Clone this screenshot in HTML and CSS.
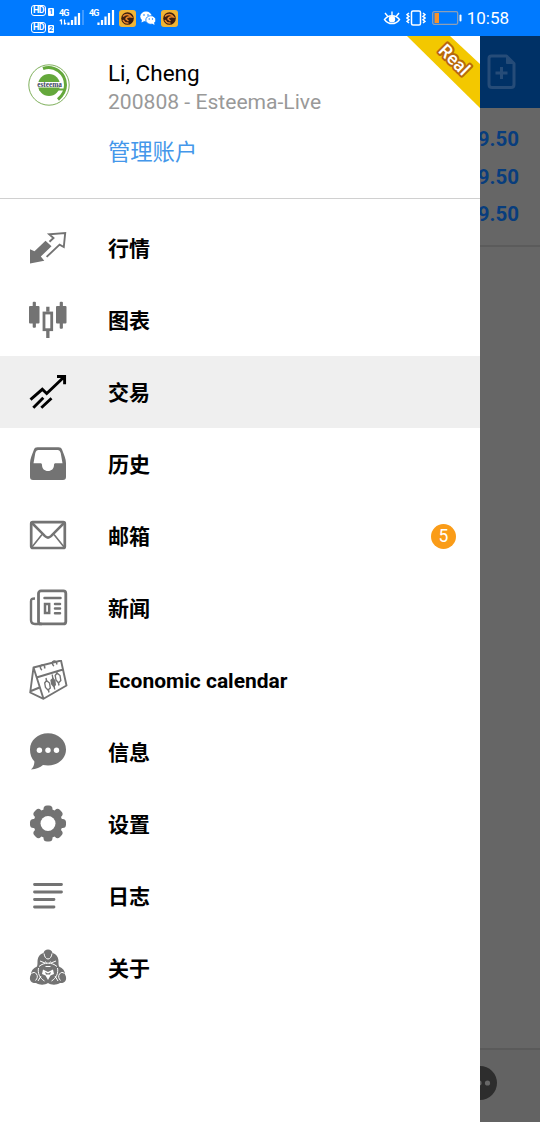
FILE: index.html
```html
<!DOCTYPE html>
<html lang="zh-CN">
<head>
    <meta charset="UTF-8">
    <meta name="viewport" content="width=device-width, initial-scale=1.0">
    <title>交易</title>
    <link rel="stylesheet" href="styles.css">
</head>
<body>
    <div class="phone">
        <header class="status-bar">
            <div class="status-left">
                <div class="hd-group">
                    <div class="hd"><b>HD</b><i>1</i></div>
                    <div class="hd"><b>HD</b><i>2</i></div>
                </div>
                <svg class="signal" width="26" height="20" viewBox="0 0 26 20">
                    <text x="0" y="8" class="net">4G</text>
                    <path d="M2.500 11.500v5M.8 13.200l1.700-1.700M5.500 11.500v5M7.200 14.800l-1.700 1.700" stroke="#fff" stroke-width="1.200" fill="none"/>
                    <path d="M9.500 14.500v2.500M13 12v5M16.500 8.500V17M20 5v12" stroke="#fff" stroke-width="2.200"/>
                    <path d="M24 2v15" stroke="#3f9aff" stroke-width="2"/>
                </svg>
                <svg class="signal second" width="26" height="20" viewBox="0 0 26 20">
                    <text x="0" y="8" class="net">4G</text>
                    <path d="M9.500 14.500v2.500M13 12v5M16.500 8.500V17M20 5v12M24 2v15" stroke="#fff" stroke-width="2.200"/>
                </svg>
                <svg class="app" width="17" height="17" viewBox="0 0 17 17">
                    <rect width="17" height="17" rx="3" fill="#f0b435"/>
                    <circle cx="8.500" cy="8.500" r="6.300" fill="#3c1d10"/>
                    <path d="M4 6.500c2.500-3 6.500-2.500 8.500.5-3-.5-5 0-5.500 2l2.500 2M4 10c1 2 3 3.500 5.500 3" stroke="#e8862a" stroke-width="1.500" fill="none"/>
                </svg>
                <svg class="wechat" width="16" height="15" viewBox="0 0 16 15">
                    <ellipse cx="6" cy="5.500" rx="5.700" ry="4.900" fill="#fff"/>
                    <path d="M2 8.500l-.5 3 3-1.500z" fill="#fff"/>
                    <ellipse cx="10.800" cy="9" rx="5" ry="4.300" fill="#fff" stroke="#007aff" stroke-width=".8"/>
                    <path d="M12 12.500l2.500 1.500-.4-2.500z" fill="#fff"/>
                    <circle cx="4" cy="4" r=".8" fill="#007aff"/>
                    <circle cx="8" cy="4" r=".8" fill="#007aff"/>
                    <circle cx="9.200" cy="8" r=".7" fill="#007aff"/>
                    <circle cx="12.500" cy="8" r=".7" fill="#007aff"/>
                </svg>
                <svg class="app" width="17" height="17" viewBox="0 0 17 17">
                    <rect width="17" height="17" rx="3" fill="#f0b435"/>
                    <circle cx="8.500" cy="8.500" r="6.300" fill="#3c1d10"/>
                    <path d="M4 6.500c2.500-3 6.500-2.500 8.500.5-3-.5-5 0-5.500 2l2.500 2M4 10c1 2 3 3.500 5.500 3" stroke="#e8862a" stroke-width="1.500" fill="none"/>
                </svg>
            </div>
            <div class="status-right">
                <svg width="18" height="16" viewBox="0 0 18 16" fill="none" stroke="#fff" stroke-width="1.400">
                    <path d="M1.500 9.500c4-5 11-5 15 0-4 5.500-11 5.500-15 0zM9 5V1.500M4.500 6L2 3M13.500 6L16 3"/>
                    <circle cx="9" cy="9.300" r="2.500" fill="#fff"/>
                </svg>
                <svg width="20" height="16" viewBox="0 0 20 16" fill="none" stroke="#fff" stroke-width="1.500">
                    <rect x="5.500" y="1" width="9" height="14" rx="1.500"/>
                    <path d="M3 3L1 4.700 3 6.400 1 8l2 1.700L1 11.400 3 13M17 3l2 1.700-2 1.700L19 8l-2 1.700 2 1.700-2 1.600"/>
                </svg>
                <svg class="battery" width="30" height="14" viewBox="0 0 30 14">
                    <rect x=".7" y=".7" width="25" height="12.600" rx="1.500" fill="none" stroke="#8f9fb5" stroke-width="1.300"/>
                    <rect x="2.500" y="2" width="4.500" height="10" fill="#f7922b"/>
                    <rect x="27.500" y="3.500" width="2" height="7" rx="1" fill="#fff"/>
                </svg>
                <span class="clock">10:58</span>
            </div>
        </header>

        <div class="screen">
            <nav class="drawer">
                <div class="account">
                    <svg class="broker" width="42" height="42" viewBox="0 0 42 42">
                        <circle cx="21" cy="21" r="20.200" fill="#fff" stroke="#7fb05c" stroke-width="1"/>
                        <path d="M15 4.500C26 .5 37.500 9 37.500 21c0 6-3.500 11-7.500 14.500" fill="none" stroke="#64a83b" stroke-width="3"/>
                        <circle cx="21" cy="21" r="11" fill="#64a83b"/>
                        <rect x="8" y="18" width="27" height="5.500" fill="#fff"/>
                        <path d="M11 25.500h26" stroke="#64a83b" stroke-width="2"/>
                        <text x="21.500" y="22.700" class="broker-name">esteema</text>
                    </svg>
                    <div class="account-text">
                        <div class="name">Li, Cheng</div>
                        <div class="login">200808 - Esteema-Live</div>
                        <a class="manage">管理账户</a>
                    </div>
                    <svg class="ribbon" width="73" height="72" viewBox="0 0 73 72">
                        <path d="M0 0h43l30 28v44z" fill="#f3c800"/>
                        <text x="0" y="0" transform="translate(30.500 15.500) rotate(45)" class="ribbon-text">Real</text>
                    </svg>
                </div>

                <ul class="menu">
                    <li class="item">
                        <svg class="icon" viewBox="0 0 40 40">
                            <path d="M2 21.300l4.500 2L17.500 12.700l6 5.500-10.700 10.300 3.500 4.300L2 35.500z"/>
                            <path class="line" d="M21.500 13.800l4-3.800-4.300-3.800 16-1.200-1.400 14-4.200-2.400-13 12.300" stroke-width="1.900"/>
                        </svg>
                        <span class="label">行情</span>
                    </li>
                    <li class="item">
                        <svg class="icon" viewBox="0 0 40 40">
                            <rect x="1" y="6" width="10.500" height="17.500" rx="1"/>
                            <rect x="4.700" y="1.700" width="3.200" height="26" rx="1"/>
                            <path d="M18.200 6.700h3.300v5h-3.300zM18.200 31h3.300v6.900h-3.300z"/>
                            <rect class="line" x="16" y="13" width="7.700" height="16.700" stroke-width="2.800"/>
                            <rect x="28" y="6" width="10.500" height="17.500" rx="1"/>
                            <rect x="31.700" y="1.700" width="3.200" height="27" rx="1"/>
                        </svg>
                        <span class="label">图表</span>
                    </li>
                    <li class="item active">
                        <svg class="icon" viewBox="0 0 40 40">
                            <path class="line" d="M2.500 27.600l11.800-10.300 4.400 4.200L36 5M29 4.500h7.600v7.800M5.300 35.700l10-10M13.300 35.700l10.200-9.500" stroke-width="2.900"/>
                        </svg>
                        <span class="label">交易</span>
                    </li>
                    <li class="item">
                        <svg class="icon" viewBox="0 0 40 40">
                            <path fill-rule="evenodd" d="M9.500 3.200h21c2 0 2.900.8 3.500 2.300 2 5 4 9.500 4 13.800V33c0 2-1 3-3 3H5c-2 0-3-1-3-3V19.300c0-4.300 2-8.800 4-13.800.6-1.500 1.500-2.300 3.500-2.300zM10.500 6C8.700 6 8 7 7.300 9L5.500 19.300h6.800c1.200 0 1.700.5 1.700 1.700 0 3.700 2.500 6 6 6s6-2.300 6-6c0-1.200.5-1.700 1.700-1.700h6.800L32.700 9c-.7-2-1.400-3-3.200-3z"/>
                        </svg>
                        <span class="label">历史</span>
                    </li>
                    <li class="item">
                        <svg class="icon" viewBox="0 0 40 40">
                            <rect class="line" x="3.200" y="6.200" width="33.600" height="25.800" rx="1.500" stroke-width="2.700"/>
                            <path class="line" d="M4 7l13 13.200c2 1.900 4 1.900 6 0L36 7" stroke-width="2.500"/>
                            <path class="line" d="M4 31l10-12.500M36 31L26 18.500" stroke-width="1.600"/>
                        </svg>
                        <span class="label">邮箱</span>
                        <span class="badge">5</span>
                    </li>
                    <li class="item">
                        <svg class="icon" viewBox="0 0 40 40">
                            <rect class="line" x="10.500" y="2.900" width="27.300" height="33" rx="2.500" stroke-width="2.800"/>
                            <path class="line" d="M7 10.500c-3 0-4 .5-4 3V32c0 3 1 4 4 4h7" stroke-width="2.400"/>
                            <path class="line" d="M16.500 10h16" stroke-width="2.500" stroke-linecap="round"/>
                            <rect class="line" x="17" y="16" width="4.200" height="9" stroke-width="2.500"/>
                            <path class="line" d="M27 15.900h5M27 20.500h5M27 25.300h5" stroke-width="2.500" stroke-linecap="round"/>
                        </svg>
                        <span class="label">新闻</span>
                    </li>
                    <li class="item">
                        <svg class="icon" viewBox="0 0 40 40">
                            <path class="line" d="M5.500 7.500L33 .500l5.500 25-23 13.300-10-31.300L2.200 32.500l13.300 6.300M8.500 17.500L35 9.500M3 31l8.500-3.500" stroke-width="1.900" stroke-linejoin="round"/>
                            <path class="line" d="M14 10c-2-1-2.500-4.500 0-5s3 2 2.500 3.500M26 6c-2-1-2.500-4.500 0-5s3 2 2.500 3.500" stroke-width="1.600"/>
                            <path class="line" d="M18.500 20.500l3 2.500.8 5-2.300 2-2.500-2.500-.8-4.500zM29 13l3 2.500.8 5-2.300 2.500-2.500-3-.8-4.500zM18 18l.5 2.500M20.500 30l.5 2.500M28.500 11l.5 2M30.500 23l.5 2.500M24.200 14.500l2.500 15" stroke-width="1.400"/>
                            <path d="M22.300 20l2.800-2.500 2.400 3 .5 4.500-2.300 2.500-2.500-3z"/>
                        </svg>
                        <span class="label">Economic calendar</span>
                    </li>
                    <li class="item">
                        <svg class="icon" viewBox="0 0 40 40">
                            <path d="M20 1.300c10 0 18 7 18 16.200s-8 16-18 16c-2 0-3.500-.2-5-.5-3 2.500-6.500 4.300-12 4.400 2.300-2 3.300-4.400 3.400-7.900C3.500 26.500 2 22.500 2 17.500 2 8.300 10 1.300 20 1.300z"/>
                            <circle class="hole" cx="11.400" cy="18.300" r="2.700"/>
                            <circle class="hole" cx="20" cy="18.300" r="2.700"/>
                            <circle class="hole" cx="28.500" cy="18.300" r="2.700"/>
                        </svg>
                        <span class="label">信息</span>
                    </li>
                    <li class="item">
                        <svg class="icon" viewBox="0 0 40 40">
                            <circle cx="20" cy="19.500" r="14.500"/>
                            <rect x="15.500" y="1.500" width="9" height="36" rx="3.500"/>
                            <rect x="15.500" y="1.500" width="9" height="36" rx="3.500" transform="rotate(45 20 19.500)"/>
                            <rect x="15.500" y="1.500" width="9" height="36" rx="3.500" transform="rotate(90 20 19.500)"/>
                            <rect x="15.500" y="1.500" width="9" height="36" rx="3.500" transform="rotate(135 20 19.500)"/>
                            <circle class="hole" cx="20" cy="19.500" r="7.500"/>
                        </svg>
                        <span class="label">设置</span>
                    </li>
                    <li class="item">
                        <svg class="icon" viewBox="0 0 40 40">
                            <path class="line" d="M6.500 8.500h27M6.500 16h27M6.500 23.500h19.500M6.500 31h19.500" stroke-width="2.800" stroke-linecap="round"/>
                        </svg>
                        <span class="label">日志</span>
                    </li>
                    <li class="item">
                        <svg class="icon" viewBox="0 0 40 40">
                            <!-- three figures leaning together -->
                            <path d="M20 1.500c2.500 0 4 1.500 4.500 3.500 4 1 6 4.500 6 8.500 0 2 0 3.500.5 5 4 1.500 6 4.500 6 8 1.500 2 1.500 5.500 0 7-2 2-4 1.500-5 1.500-4 2.500-9 2-12 0-3 2-8 2.500-12 0-1 0-3 .5-5-1.500-1.500-1.500-1.500-5 0-7 0-3.500 2-6.500 6-8 .5-1.500.5-3 .5-5 0-4 2-7.500 6-8.500.5-2 2-3.500 4.500-3.500z"/>
                            <path class="cut" d="M16 5.500c.5 3.500 2 5.500 4 5.500s3.500-2 4-5.500M7.500 32.500c2-2 2.500-4.500 1-6.500s-3-2-5-.5M32.500 32.500c-2-2-2.500-4.500-1-6.500s3-2 5-.5"/>
                            <path class="cut" d="M11 18.500c5-4.500 13-4.500 18 0M10.500 20c-1 5 1 10 6 13M29.500 20c1 5-1 10-6 13M12 13l5 2M28 13l-5 2M13 28l-3 5M27 28l3 5"/>
                            <path class="hole" d="M15 21.500l5 2.500 5-2.500 1 4.500-3.500 1.500L20 32l-2.500-4.500L14 26z"/>
                            <path d="M17 24l3 1.500 3-1.500-1 2.500h-4z"/>
                            <path class="cut" d="M17.500 13.500l1 2M22.500 13.500l-1 2M17.500 18.500h5"/>
                        </svg>
                        <span class="label">关于</span>
                    </li>
                </ul>
            </nav>

            <main class="backdrop">
                <div class="toolbar">
                    <svg width="30" height="36" viewBox="0 0 30 36" fill="none" stroke="#264c78" stroke-width="3">
                        <path d="M4.500 2h15L27 9.500v21c0 2-1 3-3 3H5c-2 0-3-1-3-3v-26C2 3 3 2 4.500 2z" stroke-linejoin="round"/>
                        <path d="M19.500 2L27 9.500h-7.500z" fill="#264c78" stroke-width="1"/>
                        <path d="M14.500 13v12M8.500 19h12"/>
                    </svg>
                </div>
                <div class="balances">
                    <div class="amount">9.50</div>
                    <div class="amount">9.50</div>
                    <div class="amount">9.50</div>
                </div>
                <div class="tabs">
                    <svg width="17" height="34" viewBox="0 0 17 34">
                        <circle cx="0" cy="17" r="17" fill="#2d2d2d"/>
                        <circle cx="-1" cy="17" r="2.600" fill="#686868"/>
                        <circle cx="7.500" cy="17" r="2.600" fill="#686868"/>
                    </svg>
                </div>
            </main>
        </div>
    </div>
</body>
</html>
```
FILE: styles.css
```css
* {
    box-sizing: border-box;
    margin: 0;
    padding: 0;
}

body {
    font-family: Roboto, "Noto Sans CJK SC", sans-serif;
    color: #000;
    background: #fff;
    overflow: hidden;
}

.phone {
    display: flex;
    flex-direction: column;
    width: 540px;
    height: 1122px;
}

/* status bar */
.status-bar {
    display: flex;
    justify-content: space-between;
    height: 36px;
    padding: 0 31px;
    background: #007aff;
    color: #fff;
}

.status-left, .status-right {
    display: flex;
    align-items: center;
}

.hd-group {
    display: flex;
    flex-direction: column;
    gap: 6px;
    width: 28px;
    padding-top: 1px;
}

.hd {
    display: flex;
    align-items: flex-end;
    gap: 2px;
    height: 11px;
}

.hd b {
    width: 15px;
    height: 11px;
    border: 1px solid #fff;
    border-radius: 3px;
    font-size: 9px;
    line-height: 9px;
    text-align: center;
    letter-spacing: -0.5px;
}

.hd i {
    width: 6px;
    height: 8px;
    border-radius: 1px;
    background: #fff;
    color: #007aff;
    font-size: 7px;
    font-style: normal;
    font-weight: bold;
    line-height: 8px;
    text-align: center;
}

.signal.second {
    margin-left: 4px;
}

.net {
    fill: #fff;
    font-size: 9px;
    font-weight: bold;
    letter-spacing: -0.8px;
}

.app {
    margin-left: 4px;
}

.wechat {
    margin-left: 4px;
}

.wechat + .app {
    margin-left: 5px;
}

.status-right {
    gap: 5px;
}

.battery {
    margin-left: 1px;
}

.clock {
    font-size: 17px;
    line-height: 38px;
}

/* drawer */
.screen {
    display: flex;
    flex: 1;
}

.drawer {
    width: 480px;
    background: #fff;
}

.account {
    position: relative;
    display: flex;
    height: 163px;
    padding: 0 28px;
    border-bottom: 1px solid #d0d0d0;
}

.broker {
    margin-top: 28px;
}

.broker-name {
    font-family: "Liberation Serif", serif;
    font-size: 7.3px;
    font-weight: bold;
    fill: #3c4660;
    text-anchor: middle;
}

.account-text {
    margin-left: 38px;
    padding-top: 23px;
}

.name {
    font-size: 22.5px;
    line-height: 29px;
}

.login {
    font-size: 21.1px;
    line-height: 28px;
    color: #999;
}

.manage {
    display: block;
    margin-top: 21px;
    font-size: 22.3px;
    line-height: 30px;
    color: #4497ea;
}

/* corner ribbon lies over the account block */
.ribbon {
    position: absolute;
    top: 0;
    right: 0;
}

.ribbon-text {
    font-size: 18px;
    font-weight: 500;
    fill: #fff;
    stroke: #b8680c;
    stroke-width: 4px;
    stroke-linejoin: round;
    paint-order: stroke;
}

.menu {
    list-style: none;
    padding-top: 13px;
}

.item {
    display: flex;
    align-items: center;
    height: 72px;
    padding: 0 24px 0 28px;
}

.item.active {
    background: #efefef;
}

.icon {
    width: 40px;
    height: 40px;
    fill: #737373;
    stroke: none;
}

.icon .line {
    fill: none;
    stroke: #737373;
}

.active .icon .line {
    stroke: #000;
}

.icon .hole {
    fill: #fff;
}

.icon .cut {
    fill: none;
    stroke: #fff;
    stroke-width: 1;
}

.label {
    margin-left: 40px;
    padding-top: 2px;
    font-size: 21px;
    font-weight: bold;
    line-height: 30px;
}

.badge {
    width: 25px;
    height: 25px;
    margin-left: auto;
    border-radius: 50%;
    background: #fa9c18;
    color: #fff;
    font-size: 17.5px;
    line-height: 25px;
    text-align: center;
}

/* dimmed page behind the drawer */
.backdrop {
    display: flex;
    flex-direction: column;
    flex: 1;
    background: #666;
    overflow: hidden;
}

.toolbar {
    display: flex;
    align-items: center;
    height: 72px;
    padding-left: 7px;
    background: #003166;
}

.balances {
    display: flex;
    flex-direction: column;
    align-items: flex-end;
    height: 139px;
    padding: 13px 21px 0 0;
    border-bottom: 2px solid #5b5b5b;
}

.amount {
    font-size: 20.5px;
    font-weight: bold;
    line-height: 37.5px;
    color: #083d7d;
}

.tabs {
    height: 74px;
    margin-top: auto;
    padding-top: 16px;
    border-top: 2px solid #5a5a5a;
    background: #636363;
}
```
